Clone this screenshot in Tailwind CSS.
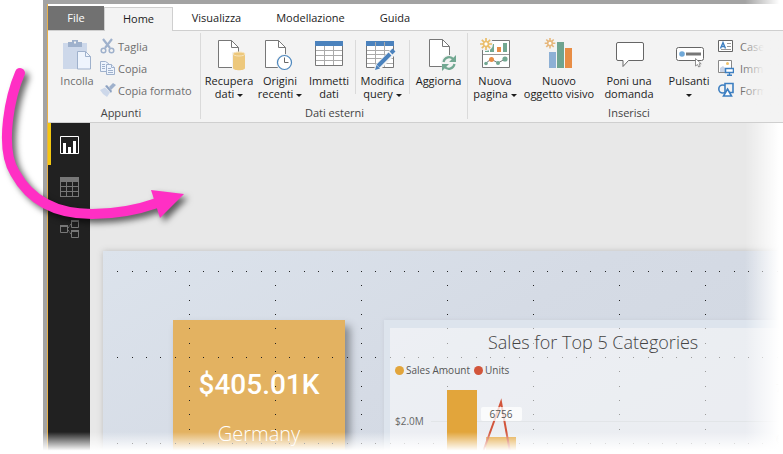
<!DOCTYPE html>
<html lang="it">
<head>
<meta charset="utf-8">
<meta name="viewport" content="width=device-width, initial-scale=1">
<title>Power BI Desktop</title>
<script src="https://cdn.jsdelivr.net/npm/@tailwindcss/browser@4"></script>
</head>
<body class="relative h-screen overflow-hidden bg-white pl-[43px] font-['Open_Sans','Noto_Sans',sans-serif] text-[11px] text-[#1c1c1c]">

<div class="relative flex h-full flex-col border-t-4 border-l-4 border-[#a3a3a3]">
<div class="flex min-h-0 grow flex-col border-l border-[#e8b04a]">

  <nav class="flex h-[27px] shrink-0 items-end border-b border-[#cfcfcf] bg-white text-[11px]" aria-label="Schede">
    <button class="h-6 w-14 bg-[#717171] pt-px text-white">File</button>
    <button class="-mb-px h-6 w-[69px] border border-b-0 border-[#cfcfcf] bg-[#f3f3f3]">Home</button>
    <button class="h-6 w-[87px] pt-px">Visualizza</button>
    <button class="h-6 w-[101px] pt-px">Modellazione</button>
    <button class="h-6 w-[68px] pt-px">Guida</button>
  </nav>

  <header class="relative flex h-[92px] shrink-0 overflow-hidden border-b border-[#cfcfcf] bg-[#f3f3f3] leading-[13px] whitespace-nowrap">
    <section class="flex w-[153px] shrink-0 flex-col pt-[5px]">
      <div class="flex h-[70px] pl-[10px] text-[#6e6e6e]">
        <button class="flex w-[38px] flex-col items-center gap-0.5">
          <svg class="size-9 shrink-0" viewBox="0 0 36 36"><path d="M4 7h24v26H4z" fill="#cdd8ea"/><path d="M9 11V6h4V4h6v2h4v5z" fill="#9fb1cc"/><path d="M15 5.500h2v2h-2z" fill="#f3f3f3"/><path d="M18.500 15.500h8l5 5v12.500h-13z" fill="#eef4fd" stroke="#9fb1cc"/><path d="M26.500 15.500v5h5" fill="none" stroke="#9fb1cc"/></svg>
          <span>Incolla</span>
        </button>
        <div class="-mt-px ml-1 flex flex-col">
          <button class="flex h-[22px] items-center gap-0.5"><svg class="size-4" viewBox="0 0 16 16" fill="none" stroke="#9fb1cc"><path d="M3 1l7 9M12 1L5 10" stroke-width="2.200"/><circle cx="3.500" cy="12.500" r="2.300" stroke-width="1.500"/><circle cx="11.500" cy="12.500" r="2.300" stroke-width="1.500"/></svg>Taglia</button>
          <button class="flex h-[22px] items-center gap-0.5"><svg class="size-4" viewBox="0 0 16 16" fill="#eef4fd" stroke="#9fb1cc"><path d="M.5 1.500h5l3 2v8h-8z"/><path d="M2 4.500h3M2 6.500h3M2 8.500h3"/><path d="M6.500 4.500h5l3 3v7h-8z"/><path d="M11.500 4.500v3h3M8 8.500h3M8 10.500h5M8 12.500h5"/></svg>Copia</button>
          <button class="flex h-[22px] items-center gap-0.5"><svg class="size-4" viewBox="0 0 16 16"><path d="M0 8l5-2.500 5 5L7 15 3 12z" fill="#cdd8ea"/><path d="M5 4l2-1 5 6-1 2z" fill="#8ea3c2"/><path d="M9 5l4-4 3 2-5 5z" fill="#9fb1cc"/></svg>Copia formato</button>
        </div>
      </div>
      <h2 class="pr-[7px] text-center text-[#444]">Appunti</h2>
    </section>

    <section class="flex w-[267px] shrink-0 flex-col pt-[5px]">
      <div class="flex h-[70px]">
        <button class="flex w-14 shrink-0 flex-col items-center gap-0.5">
          <svg class="size-9 shrink-0" viewBox="0 0 36 36"><path d="M7.500 4.500h13l7 7v20h-20z" fill="#fff" stroke="#777"/><path d="M20.500 4.500v7h7" fill="none" stroke="#777"/><path d="M21 16h14v19H21z" fill="#f3f3f3"/><path d="M22 18v14c0 3 12 3 12 0V18z" fill="#edc87c"/><ellipse cx="28" cy="18" rx="6" ry="2" fill="#edc87c" stroke="#f8e5bd"/></svg>
          <span>Recupera<br>dati <span class="inline-block border-x-3 border-t-3 border-x-transparent border-t-current align-middle"></span></span>
        </button>
        <button class="flex w-[46px] shrink-0 flex-col items-center gap-0.5">
          <svg class="size-9 shrink-0" viewBox="0 0 36 36"><path d="M3.500 4.500h13l7 7v20h-20z" fill="#fff" stroke="#777"/><path d="M16.500 4.500v7h7" fill="none" stroke="#777"/><circle cx="22.500" cy="26.500" r="8.500" fill="#f3f3f3"/><circle cx="22.500" cy="26.500" r="7" fill="#fff" stroke="#4b86bd" stroke-width="1.200"/><path d="M22.500 21.500v5h4" fill="none" stroke="#666"/></svg>
          <span>Origini<br>recenti <span class="inline-block border-x-3 border-t-3 border-x-transparent border-t-current align-middle"></span></span>
        </button>
        <button class="flex w-[52px] shrink-0 flex-col items-center gap-0.5">
          <svg class="size-9 shrink-0" viewBox="0 0 36 36"><path d="M4.500 5.500h27v24h-27z" fill="#fff" stroke="#777"/><path d="M4 5h28v5H4z" fill="#4b82bd"/><path d="M13.500 10v19M22.500 10v19M5 14.500h26M5 19.500h26M5 24.500h26" stroke="#aaa"/></svg>
          <span>Immetti<br>dati</span>
        </button>
        <div class="mt-1 h-[54px] w-px shrink-0 bg-[#dadada]"></div>
        <button class="flex w-[53px] shrink-0 flex-col items-center gap-0.5">
          <svg class="size-9 shrink-0" viewBox="0 0 36 36"><path d="M1.500 5.500h27v26h-27z" fill="#fff" stroke="#777"/><path d="M1 5h28v5H1z" fill="#4b82bd"/><path d="M10.500 6v25M19.500 6v25M2 14.500h26M2 18.500h26M2 22.500h26M2 27.500h26" stroke="#aaa"/><path d="M11 33L29 15" stroke="#f3f3f3" stroke-width="7"/><path d="M13 30L25 18" stroke="#4b82bd" stroke-width="4"/><path d="M26 17l3-3" stroke="#4b82bd" stroke-width="4"/><path d="M10 34l1.500-5 3.500 3.500z" fill="#4b82bd"/></svg>
          <span>Modifica<br>query <span class="inline-block border-x-3 border-t-3 border-x-transparent border-t-current align-middle"></span></span>
        </button>
        <div class="mt-1 h-[54px] w-px shrink-0 bg-[#dadada]"></div>
        <button class="flex w-[57px] shrink-0 flex-col items-center gap-0.5">
          <svg class="size-9 shrink-0" viewBox="0 0 36 36"><path d="M8.500 3.500h13l7 7v20h-20z" fill="#fff" stroke="#777"/><path d="M21.500 3.500v7h7" fill="none" stroke="#777"/><circle cx="28" cy="27" r="8" fill="#f3f3f3"/><path d="M22.500 26c1-5 7-6.500 10-2.500M33.500 28c-1 5-7 6.500-10 2.500" fill="none" stroke="#72a892" stroke-width="2.200"/><path d="M35 19v7h-7zM21 35v-7h7z" fill="#72a892"/></svg>
          <span>Aggiorna</span>
        </button>
      </div>
      <h2 class="text-center text-[#444]">Dati esterni</h2>
    </section>

    <section class="flex w-[322px] shrink-0 flex-col pt-[5px]">
      <div class="flex h-[70px]">
        <button class="flex w-[54px] shrink-0 flex-col items-center gap-0.5">
          <svg class="size-9 shrink-0" viewBox="0 0 36 36"><path d="M5.500 4.500h27v27h-27z" fill="#fff" stroke="#777"/><path d="M6 18.500h26" stroke="#999"/><path d="M13 8h4v8h-4zM26 7h4v9h-4zM8 14h4v2H8z" fill="#72a892"/><path d="M20 11h4v5h-4z" fill="#e88d45"/><path d="M8 28l6-5 7 4 7-4" fill="none" stroke="#777"/><circle cx="9" cy="27.500" r="1.800" fill="#72a892"/><circle cx="14.500" cy="23.500" r="2.500" fill="#e88d45"/><circle cx="21" cy="27" r="2" fill="#72a892"/><circle cx="28" cy="23" r="2.600" fill="#72a892"/><circle cx="9" cy="8" r="7" fill="#f3f3f3"/><g stroke="#eabd67" stroke-width="1.700"><path d="M9 2v3M9 11v3M3 8h3M12 8h3M4.800 3.800l2.100 2.100M11.100 10.100l2.100 2.100M4.800 12.200l2.100-2.100M11.100 5.900l2.100-2.100"/><circle cx="9" cy="8" r="2.500" fill="#fff"/></g></svg>
          <span>Nuova<br>pagina <span class="inline-block border-x-3 border-t-3 border-x-transparent border-t-current align-middle"></span></span>
        </button>
        <button class="flex w-[74px] shrink-0 flex-col items-center gap-0.5">
          <svg class="size-9 shrink-0" viewBox="0 0 36 36"><path d="M8 16h7v16H8z" fill="#8db0d5"/><path d="M16 6h7v26h-7z" fill="#6fa490"/><path d="M24 12h7v20h-7z" fill="#e88d45"/><circle cx="9" cy="7.200" r="6.500" fill="#f3f3f3"/><g stroke="#e6b77c" stroke-width="1.600"><path d="M9 2v2.500M9 10v2.500M3.700 7.200h2.500M11.800 7.200h2.500M5.300 3.500l1.700 1.700M11 9.200l1.700 1.700M5.300 10.900L7 9.200M11 5.200l1.700-1.700"/><circle cx="9" cy="7.200" r="2.300" fill="#fff"/></g></svg>
          <span>Nuovo<br>oggetto visivo</span>
        </button>
        <button class="flex w-[66px] shrink-0 flex-col items-center gap-0.5">
          <svg class="size-9 shrink-0" viewBox="0 0 36 36"><path d="M7 6.500h24q1.500 0 1.500 1.500v15q0 1.500-1.500 1.500H17.500L12 30.500v-6H7q-1.500 0-1.500-1.500V8Q5.500 6.500 7 6.500z" fill="#fff" stroke="#666"/></svg>
          <span>Poni una<br>domanda</span>
        </button>
        <button class="flex w-[54px] shrink-0 flex-col items-center gap-0.5">
          <svg class="size-9 shrink-0" viewBox="0 0 36 36"><rect x="5.500" y="11.500" width="27" height="13" rx="2" fill="#fff" stroke="#666"/><circle cx="11" cy="18" r="2.800" fill="#6fa8d8"/><path d="M15 18h15" stroke="#777" stroke-width="3"/><path d="M24.500 22.500v7.500l2-1.500 1.200 2.500 1.500-.7-1.200-2.500h2.200z" fill="#fff" stroke="#777" stroke-width=".8"/></svg>
          <span>Pulsanti<br><span class="inline-block border-x-3 border-t-3 border-x-transparent border-t-current align-middle"></span></span>
        </button>
        <div class="-mt-px ml-0.5 flex shrink-0 flex-col">
          <button class="flex h-[22px] items-center gap-1.5"><svg class="size-4" viewBox="0 0 16 16"><path d="M.5 2.500h14v11H.5z" fill="#fff" stroke="#666"/><path d="M2.500 10.500L5 4.500l2.500 6M3.500 8.500h3" fill="none" stroke="#3d7fc1" stroke-width="1.400"/><path d="M9 5.500h4M9 8.500h4M3 11.500h10" stroke="#999"/></svg>Casella</button>
          <button class="flex h-[22px] items-center gap-1.5"><svg class="size-4" viewBox="0 0 16 16"><path d="M.5.5h13v12H.5z" fill="#fff" stroke="#888"/><path d="M2 12V8l3-2 3 3v3z" fill="#c8d4e8"/><circle cx="9.500" cy="3.500" r="1.500" fill="#efc16a"/><path d="M7.500 8.500h8v4h-8z" fill="#fff" stroke="#3d7fc1" stroke-width="1.500"/><path d="M11.500 12.500V15M9 15.200h5" stroke="#3d7fc1" stroke-width="1.400"/></svg>Imma</button>
          <button class="flex h-[22px] items-center gap-1.5"><svg class="size-4" viewBox="0 0 16 16" fill="#f3f3f3" stroke="#3d7fc1" stroke-width="1.600"><circle cx="4.800" cy="7" r="4"/><path d="M7 1.500h8v9H7z"/><path d="M9.500 7l4 7h-8z" fill="#fff"/></svg>Forme</button>
        </div>
      </div>
      <h2 class="text-center text-[#444]">Inserisci</h2>
    </section>
    <div class="absolute top-[2px] left-[152px] h-[86px] w-px bg-[#dadada]"></div>
    <div class="absolute top-[2px] left-[419px] h-[86px] w-px bg-[#dadada]"></div>
    <div class="absolute inset-y-0 right-0 w-[47px] bg-linear-to-r from-[#f3f3f3]/20 to-[#f3f3f3] to-60%"></div>
  </header>

  <main class="relative flex min-h-0 grow bg-[#e8e8e8]">
    <nav class="flex w-[42px] shrink-0 flex-col bg-[#212121]" aria-label="Visualizzazioni">
      <button class="flex h-[42px] items-center border-l-[3px] border-[#f2c811] pl-[9px]" aria-label="Report"><svg class="mt-0.5 h-[18px] w-[19px]" viewBox="0 0 19 18"><path d="M.5.5h18v17H.5z" fill="none" stroke="#fff"/><path d="M3 7h3v10H3zM8 11h3v6H8zM13 5h3v12h-3z" fill="#fff"/></svg></button>
      <button class="flex h-[42px] items-center pl-3" aria-label="Dati"><svg class="mt-0.5 h-5 w-[19px]" viewBox="0 0 19 20"><path d="M0 0h19v20H0z" fill="#777"/><path d="M1 5h5v4H1zM7 5h5v4H7zM13 5h5v4h-5zM1 10h5v4H1zM7 10h5v4H7zM13 10h5v4h-5zM1 15h5v4H1zM7 15h5v4H7zM13 15h5v4h-5z" fill="#212121"/></svg></button>
      <button class="flex h-[42px] items-center pl-3" aria-label="Relazioni"><svg class="mt-0.5 h-[18px] w-[19px]" viewBox="0 0 19 18" fill="none" stroke="#777"><path d="M.5 5.500h7v7h-7zM11.500.5h7v7h-7zM11.500 10.500h7v7h-7z"/><path d="M0 6h8M11 1h8M11 11h8" stroke-width="2"/><path d="M8 8l3-4M8 10l3 4" stroke-dasharray="2 1"/></svg></button>
    </nav>

    <div class="flex min-w-0 grow overflow-hidden pt-32 pl-[13px]">
      <article class="relative flex grow items-start bg-linear-150 from-[#dce3ec] via-[#d5dbe5] to-[#d1d7e1] pt-[69px] pl-[70px] shadow-[0_0_6px_#bdbdbd]">
        <section class="h-full w-[172px] shrink-0 bg-[#e3b261] pt-[45px] text-center text-white shadow-[5px_6px_8px_#858990]">
          <p class="font-[Roboto] text-[28px] leading-10 font-medium">$405.01K</p>
          <p class="mt-[10px] text-xl leading-[38px] font-light">Germany</p>
        </section>
        <svg class="absolute top-5 left-px h-full w-full" aria-hidden="true">
          <defs><pattern id="grid" x="-1" y="0" width="86" height="86" patternUnits="userSpaceOnUse"><path d="M0 0h1v1H0zM14 0h1v1h-1zM29 0h1v1h-1zM43 0h1v1h-1zM57 0h1v1h-1zM72 0h1v1h-1zM0 14h1v1H0zM0 29h1v1H0zM0 43h1v1H0zM0 57h1v1H0zM0 72h1v1H0z" fill="#222"/></pattern></defs>
          <rect width="100%" height="100%" fill="url(#grid)" shape-rendering="crispEdges"/>
        </svg>
        <section class="relative ml-[39px] h-full min-w-0 grow border-t-8 border-l-[6px] border-[#dde4ed] bg-white/55 bg-clip-padding text-[#666] shadow-[0_0_4px_#c8ced8]">
          <h1 class="pl-[98px] text-[18px] leading-7 font-light whitespace-nowrap text-[#444]">Sales for Top 5 Categories</h1>
          <div class="mt-1.5 flex items-center gap-1 pl-[5px] text-[10px] leading-4 text-[#555]">
            <span class="flex items-center gap-0.5"><i class="size-[9px] rounded-full bg-[#e2a53b]"></i>Sales Amount</span>
            <span class="flex items-center gap-0.5"><i class="size-[9px] rounded-full bg-[#d2553b]"></i>Units</span>
          </div>
          <svg class="absolute top-[49px] left-0 h-[77px] w-full font-['Open_Sans',sans-serif] text-[10px]" role="img" aria-label="Sales Amount e Units">
            <path d="M41 44.500h400" stroke="#e2e5e8"/>
            <path d="M57 13h30v64H57zM96 60h30v17H96z" fill="#e2a53b"/>
            <path d="M93 75L111 25L120 75" fill="none" stroke="#d2553b" stroke-width="2"/>
            <rect x="91" y="30" width="41" height="14" rx="2" fill="#fff" fill-opacity=".75"/>
            <text x="111" y="41" text-anchor="middle" fill="#555">6756</text>
            <text x="5" y="48" fill="#666">$2.0M</text>
            <text x="386" y="15" fill="#888">7</text><text x="386" y="66" fill="#888">6</text>
          </svg>
        </section>
      </article>
    </div>
    <div class="absolute inset-y-0 right-0 w-[38px] bg-linear-to-r from-transparent to-white to-90%"></div>
  </main>
</div>
</div>

<div class="absolute top-0 right-0 h-[30px] w-[38px] bg-linear-to-r from-transparent to-white to-90%"></div>
<div class="absolute inset-x-0 bottom-0 h-[22px] bg-linear-to-b from-transparent to-white to-85%"></div>

<svg class="pointer-events-none absolute top-[60px] left-0 h-[170px] w-[200px] drop-shadow-[4px_4px_3px_rgba(0,0,0,0.6)]" viewBox="0 60 200 170" aria-hidden="true">
  <path d="M20 73C14 87 10 103 8 120C5 146 8 162 15 173C26 193 47 214 92 214C118 214 140 209 157 203" fill="none" stroke="#ff2fc4" stroke-width="10" stroke-linecap="round"/>
  <path d="M151 190L184 194L160 218z" fill="#ff2fc4"/>
</svg>
</body>
</html>
